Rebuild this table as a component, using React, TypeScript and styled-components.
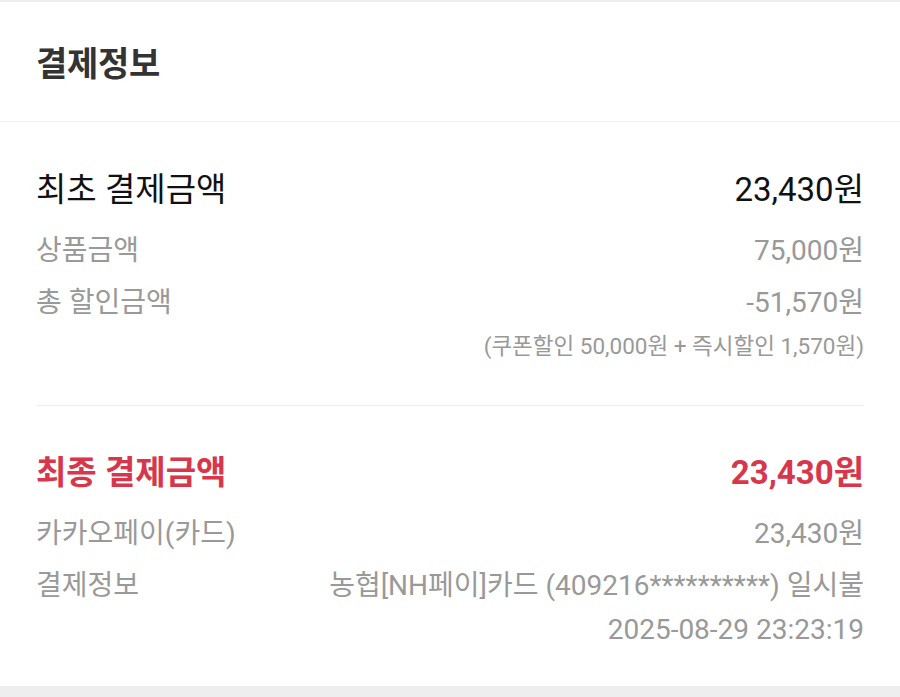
import React, { FC } from 'react';
import styled, { createGlobalStyle } from 'styled-components';

const GlobalStyle = createGlobalStyle`
    html, body {
        margin: 0;
        padding: 0;
        background: #ffffff;
    }
    body {
        font-family: Roboto, "Noto Sans CJK KR", sans-serif;
        -webkit-font-smoothing: antialiased;
    }
`;

const Page = styled.div`
    width: 900px;
    height: 697px;
    display: flex;
    flex-direction: column;
    background: #ffffff;
    border-top: 2px solid #eeeeee;
    box-sizing: border-box;
    overflow: hidden;
`;

const Header = styled.header`
    height: 119px;
    display: flex;
    align-items: center;
    padding: 0 36px;
    border-bottom: 1px solid #f3f3f3;
`;

const Title = styled.h2`
    margin: 0;
    font-size: 34px;
    font-weight: 700;
    color: #333333;
    letter-spacing: -0.3px;
`;

const Section = styled.section<{ $top: number; $bottom: number; $divider?: boolean }>`
    margin: 0 36px;
    padding: ${(p) => p.$top}px 0 ${(p) => p.$bottom}px;
    border-bottom: ${(p) => (p.$divider ? '1px solid #eeeeee' : 'none')};
`;

const MainRow = styled.div<{ $accent?: boolean }>`
    height: 44px;
    display: flex;
    align-items: center;
    justify-content: space-between;
    font-size: 33px;
    font-weight: ${(p) => (p.$accent ? 700 : 400)};
    color: ${(p) => (p.$accent ? '#d8364b' : '#111111')};
    margin-bottom: 13px;
`;

const SubRow = styled.div`
    height: 52px;
    display: flex;
    align-items: center;
    justify-content: space-between;
    font-size: 28px;
    color: #999999;
`;

const Note = styled.div<{ $height: number; $size: number }>`
    height: ${(p) => p.$height}px;
    display: flex;
    align-items: center;
    justify-content: flex-end;
    font-size: ${(p) => p.$size}px;
    color: #999999;
`;

const Bottom = styled.div`
    flex: 1;
    background: #eeeeee;
`;

const App: FC = () => (
    <>
        <GlobalStyle />
        <Page>
            <Header>
                <Title>결제정보</Title>
            </Header>
            <Section $top={43} $bottom={43} $divider>
                <MainRow>
                    <span>최초 결제금액</span>
                    <span>23,430원</span>
                </MainRow>
                <SubRow>
                    <span>상품금액</span>
                    <span>75,000원</span>
                </SubRow>
                <SubRow>
                    <span>총 할인금액</span>
                    <span>-51,570원</span>
                </SubRow>
                <Note $height={36} $size={22.5}>
                    (쿠폰할인 50,000원 + 즉시할인 1,570원)
                </Note>
            </Section>
            <Section $top={42} $bottom={37}>
                <MainRow $accent>
                    <span>최종 결제금액</span>
                    <span>23,430원</span>
                </MainRow>
                <SubRow>
                    <span>카카오페이(카드)</span>
                    <span>23,430원</span>
                </SubRow>
                <SubRow>
                    <span>결제정보</span>
                    <span>농협[NH페이]카드 (409216**********) 일시불</span>
                </SubRow>
                <Note $height={40} $size={28}>
                    2025-08-29 23:23:19
                </Note>
            </Section>
            <Bottom />
        </Page>
    </>
);

export default App;
